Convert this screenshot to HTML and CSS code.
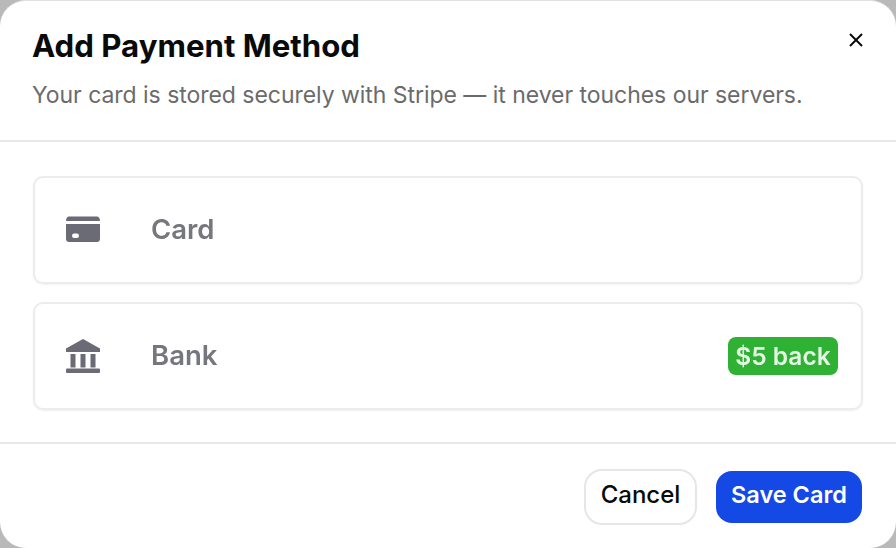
FILE: index.html
```html
<!DOCTYPE html>
<html lang="en">
<head>
<meta charset="utf-8">
<title>Add Payment Method</title>
<link rel="stylesheet" href="styles.css">
</head>
<body>
<main class="modal">
  <header class="modal-header">
    <h1 class="title">Add Payment Method</h1>
    <p class="subtitle">Your card is stored securely with Stripe — it never touches our servers.</p>
    <button class="close" aria-label="Close">
      <svg width="16" height="16" viewBox="0 0 16 16"><path d="M2 2L14 14M14 2L2 14" fill="none" stroke="#0a0a0a" stroke-width="2"/></svg>
    </button>
  </header>
  <section class="modal-body">
    <div class="option">
      <svg class="option-icon" width="36" height="36" viewBox="0 0 36 36"><path d="M1 10C1.100 7 2.300 5.500 4 5.500h28c1.700 0 2.900 1.500 3 4.500z" fill="#6b6b76"/><path d="M1 13h34V28c0 1.700-1.300 3-3 3H4c-1.700 0-3-1.300-3-3z" fill="#6b6b76"/><rect x="7" y="22.500" width="7" height="4.500" rx="2.200" fill="#fff"/></svg>
      <span class="option-label">Card</span>
    </div>
    <div class="option">
      <svg class="option-icon" width="36" height="36" viewBox="0 0 36 36"><path d="M18 2L35 11.500V15H1V11.500z" fill="#6b6b76"/><path d="M5.500 17h5v13.500h-5zM15.500 17h5v13.500h-5zM25.500 17h5v13.500h-5z" fill="#6b6b76"/><rect x="1" y="31.500" width="34" height="4.500" rx="1" fill="#6b6b76"/></svg>
      <span class="option-label">Bank</span>
      <span class="badge">$5 back</span>
    </div>
  </section>
  <footer class="modal-footer">
    <button class="btn btn-cancel">Cancel</button>
    <button class="btn btn-save">Save Card</button>
  </footer>
</main>
</body>
</html>
```

FILE: styles.css
```css
* { box-sizing: border-box; }
html, body { margin: 0; height: 100%; }
body {
  width: 896px;
  height: 548px;
  overflow: hidden;
  background: #b9b9b9;
  font-family: Inter, "Liberation Sans", sans-serif;
}
.modal {
  width: 896px;
  height: 548px;
  background: #fff;
  border-top: 1px solid #e2e2e2;
  border-radius: 26px;
  display: flex;
  flex-direction: column;
}
.modal-header {
  position: relative;
  height: 141px;
  padding: 26px 32px 0;
  border-bottom: 2px solid #e8e8e8;
}
.title {
  margin: 0;
  font-size: 31.200px;
  line-height: 38px;
  font-weight: 700;
  color: #0a0a0a;
}
.subtitle {
  margin: 15px 0 0;
  font-size: 23px;
  line-height: 30px;
  letter-spacing: -0.04px;
  color: #6b6b6b;
}
.close {
  position: absolute;
  top: 31px;
  right: 32px;
  width: 16px;
  height: 16px;
  padding: 0;
  border: 0;
  background: none;
  display: flex;
}
.modal-body {
  flex: 1;
  padding: 34px 33px 0;
  display: flex;
  flex-direction: column;
  gap: 18px;
}
.option {
  height: 108px;
  padding: 0 23px 0 31px;
  display: flex;
  align-items: center;
  border: 2px solid #ececec;
  border-radius: 10px;
  box-shadow: 0 1px 2px rgba(0,0,0,.06);
}
.option-icon { flex: none; margin-right: 50px; margin-top: -2px; margin-left: -1px; filter: blur(.5px); }
.option-label {
  font-size: 27.500px;
  line-height: 32px;
  margin-top: -3px;
  font-weight: 600;
  color: #76767e;
  filter: blur(.6px);
}
.badge {
  margin-left: auto;
  height: 38px;
  width: 110px;
  display: flex;
  align-items: center;
  justify-content: center;
  border-radius: 8px;
  background: #2fb134;
  color: #e4f5e4;
  font-size: 24.500px;
  font-weight: 600;
  filter: blur(.4px);
}
.modal-footer {
  height: 106px;
  padding: 2px 34px 0 0;
  border-top: 2px solid #e8e8e8;
  display: flex;
  justify-content: flex-end;
  align-items: center;
  gap: 19px;
}
.btn {
  font-family: inherit;
  font-size: 24px;
  font-weight: 600;
  padding: 0 0 6px;
}
.btn-cancel {
  width: 113px;
  height: 56px;
  background: #fff;
  color: #0a0a0a;
  border: 2px solid #e6e6e6;
  border-radius: 18px;
  font-weight: 500;
}
.btn-save {
  width: 146px;
  height: 52px;
  background: #1549e6;
  color: #fff;
  border: 0;
  border-radius: 16px;
  font-size: 23.500px;
}
```
